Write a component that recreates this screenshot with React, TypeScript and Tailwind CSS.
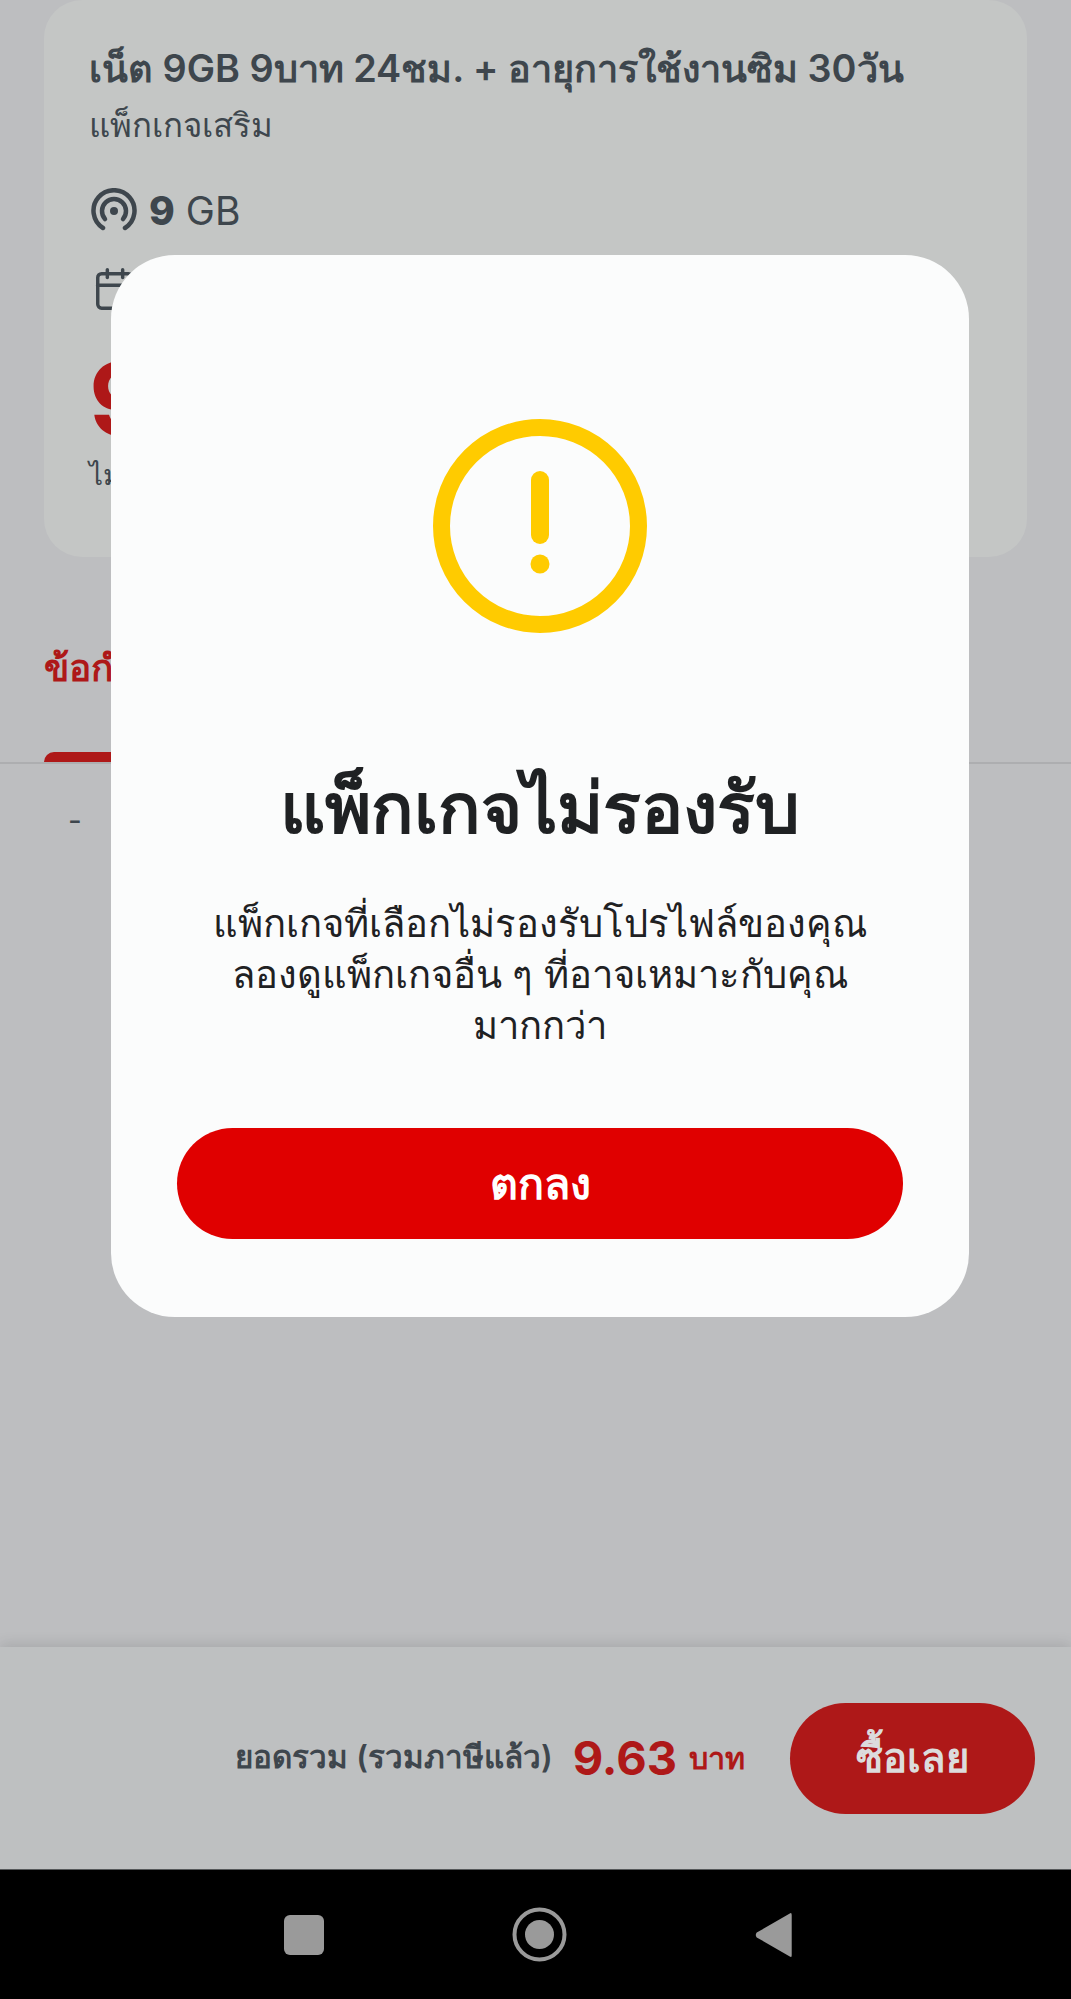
import { Calendar } from 'lucide-react'

function SignalIcon() {
  return (
    <svg width="46" height="46" viewBox="0 0 46 46" fill="none" stroke="#3e464d" strokeWidth="4.5" strokeLinecap="round">
      <path d="M12 40 A20.5 20.5 0 1 1 34 40" />
      <path d="M14 31 A12 12 0 1 1 32 31" />
      <circle cx="23" cy="23" r="4" fill="#3e464d" stroke="none" />
    </svg>
  )
}

function WarningIcon() {
  return (
    <svg width="216" height="216" viewBox="0 0 216 216" fill="none">
      <circle cx="108" cy="108" r="98.5" stroke="#ffcb00" strokeWidth="17" />
      <rect x="99" y="53" width="18" height="73" rx="9" fill="#ffcb00" />
      <circle cx="108" cy="146" r="9.5" fill="#ffcb00" />
    </svg>
  )
}

export default function App() {
  return (
    <div className="relative flex h-[1999px] w-full flex-col overflow-hidden bg-[#bdbec0] font-['Inter','Noto_Sans',sans-serif] text-[#3e464d]">
      <main className="flex-1">
        <section className="mx-[44px] h-[557px] rounded-[38px] bg-[#c4c6c5] pl-[45px] pt-[42px]">
          <h1 className="text-[37.8px] leading-[52px] font-semibold">เน็ต 9GB 9บาท 24ชม. + อายุการใช้งานซิม 30วัน</h1>
          <p className="mt-[9px] text-[33px] leading-[44px]">แพ็กเกจเสริม</p>
          <div className="mt-[38px] flex items-center gap-[12px] pl-[2px] text-[39px] leading-[52px]">
            <SignalIcon />
            <span><b className="font-extrabold">9</b> GB</span>
          </div>
          <div className="mt-[29px] flex h-[46px] items-center pl-[3px]">
            <Calendar size={46} strokeWidth={1.8} />
          </div>
          <div className="mt-[37px] h-[100px] text-[100px] leading-[100px] font-bold text-[#ae1818]">9</div>
          <p className="mt-[6px] text-[28px] leading-[40px]">ไม่รวมภาษี</p>
        </section>

        <div className="mt-[86px] border-b-2 border-[#adaeb0] px-[44px]">
          <h2 className="h-[109px] text-[37px] leading-[50px] font-semibold text-[#ae1818]">ข้อกำหนดและเงื่อนไข</h2>
          <div className="h-[10px] w-[240px] rounded-t-[10px] bg-[#ae1818]" />
        </div>
        <p className="mt-[34px] pl-[68px] text-[30px] leading-[44px]">-</p>
      </main>

      <footer className="flex h-[222px] items-center justify-end gap-[45px] bg-[#bec0c1] pr-[36px] shadow-[0_-4px_12px_rgba(0,0,0,0.1)]">
        <div className="flex items-center">
          <span className="text-[31.4px] font-semibold">ยอดรวม (รวมภาษีแล้ว)</span>
          <span className="ml-[20px] text-[47px] font-bold text-[#ae1818]">9.63</span>
          <span className="ml-[12px] text-[30.5px] font-semibold text-[#ae1818]">บาท</span>
        </div>
        <button className="h-[111px] w-[245px] rounded-full bg-[#ae1818] text-[40px] font-semibold text-[#dcdcdc]">ซื้อเลย</button>
      </footer>

      <nav className="flex h-[130px] items-center justify-center gap-[188px] border-t border-[#55585a] bg-black pl-[4px]">
        <div className="h-[40px] w-[40px] rounded-[6px] bg-[#9a9a9a]" />
        <svg width="55" height="55" viewBox="0 0 55 55" fill="none">
          <circle cx="27.5" cy="27.5" r="25" stroke="#9a9a9a" strokeWidth="4" />
          <circle cx="27.5" cy="27.5" r="14.5" fill="#9a9a9a" />
        </svg>
        <svg width="37" height="46" viewBox="0 0 38 48" fill="#9a9a9a">
          <path d="M36 1.5 Q38 0 38 3 V45 Q38 48 36 46.5 L1.5 26.5 Q-0.5 24 1.5 21.5 Z" />
        </svg>
      </nav>

      <div className="absolute left-[111px] top-[255px] flex h-[1062px] w-[858px] flex-col items-center rounded-[64px] bg-[#fbfcfc] px-[66px] pt-[163px] text-center text-[#1f2123]">
        <WarningIcon />
        <h2 className="mt-[134px] text-[70.5px] leading-[80px] font-semibold">แพ็กเกจไม่รองรับ</h2>
        <p className="mt-[50px] text-[38.2px] leading-[51px]">
          แพ็กเกจที่เลือกไม่รองรับโปรไฟล์ของคุณ
          <br />
          ลองดูแพ็กเกจอื่น ๆ ที่อาจเหมาะกับคุณ
          <br />
          มากกว่า
        </p>
        <button className="mt-[77px] h-[111px] w-full shrink-0 rounded-full bg-[#e00000] text-[43px] font-semibold text-white">ตกลง</button>
      </div>
    </div>
  )
}
